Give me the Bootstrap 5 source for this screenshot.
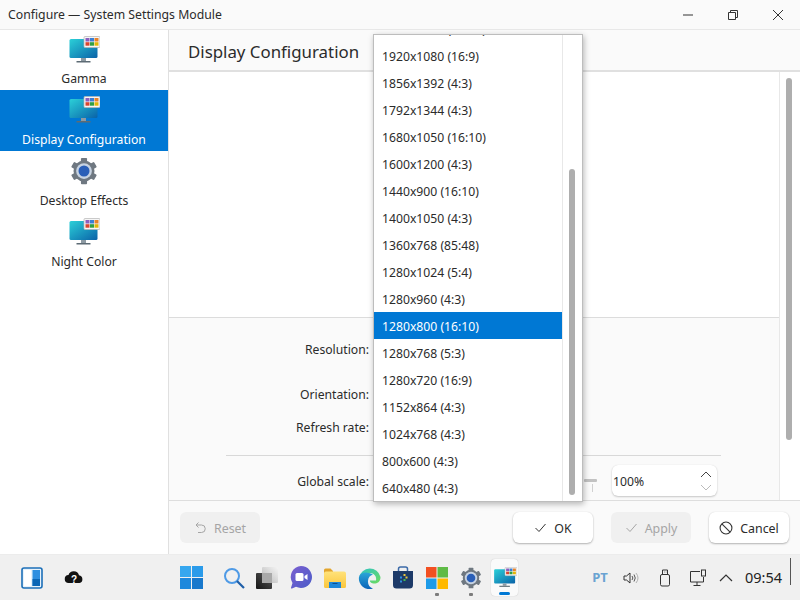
<!DOCTYPE html>
<html lang="en"><head><meta charset="utf-8"><title>Configure</title>
<link href="https://cdn.jsdelivr.net/npm/bootstrap@5.3.0/dist/css/bootstrap.min.css" rel="stylesheet">
<style>
html,body{height:100%;overflow:hidden}
body{font-family:"Noto Sans","Open Sans",sans-serif;font-size:12.2px;color:#2b2b2b;background:#fff}
.shell{width:800px;height:600px;position:relative;overflow:hidden}
.titlebar{height:30px;background:#fafafa;padding:0 0 0 8px;border-bottom:1px solid #e8e8e8}
.titlebar span{font-size:12.25px;margin-top:1px}
.winbtn{width:45px;height:29px;display:flex;align-items:center;justify-content:center}
.mainarea{height:524px}
.sidebar{width:169px;flex:none;background:#fff;border-right:1px solid #e0e0e0}
.sideitem{height:61px;padding-top:6px;text-align:center;line-height:18px}
.sideitem:first-child{height:60px}
.sideitem svg{display:block;margin:0 auto 7px}
.sideitem:first-child svg{margin-bottom:6px}
.sideitem.active-item{background:#0078d4;color:#fff}
.pane{flex:1;min-width:0;background:#fafafa}
.panehead{height:42px;border-bottom:2px solid #e0e0e0;padding:0 19px;font-size:16.85px;line-height:43px}
.paneleft{flex:1;min-width:0}
.canvasarea{height:246px;background:#fff;border-bottom:1px solid #dcdcdc}
.formarea{height:182px}
.railbox{border-left:1px solid #e8e8e8;width:21px;flex:none;position:relative;background:#fff}
.formfield{text-align:right;line-height:18px;padding-right:410px}
.fieldres{height:58px;padding-top:23px}
.fieldori{height:33px;padding-top:10px}
.fieldref{height:33px;padding-top:10px}
.sepline{border-top:1px solid #d8d8d8;margin:13px 0 0 57px;width:495px}
.fieldscale{padding-top:17px}
.buttonbar{height:54px;border-top:1px solid #dedede;padding:11px 11px 0 11px;background:#fafafa}
.winaction{width:80px;height:31px;padding:3px 0 0;font-size:12.4px;border-radius:6px;background:#fff;border:0;box-shadow:0 1px 2px rgba(0,0,0,.28),0 0 1px rgba(0,0,0,.12);color:#2b2b2b;display:flex;align-items:center;justify-content:center;gap:7px}
.winaction svg{margin-top:-3px}
.winaction.offaction{background:#f0f0f0;box-shadow:none;color:#a5a5a5;opacity:1}
.gapok{margin-left:auto}
.gapapply,.gapcancel{margin-left:18px}
.vscroll{position:absolute;left:6px;top:6px;width:6px;height:362px;border-radius:3px;background:#aeaeae}
.popup{position:absolute;left:373px;top:34px;width:210px;height:468px;background:#fff;border:1px solid #bdbdbd;box-shadow:1px 2px 6px rgba(0,0,0,.28);overflow:hidden;z-index:5;display:flex}
.popuplist{width:188px;flex:none;margin:-20px 0 0 0;padding:0;list-style:none}
.popuplist li{height:27px;line-height:30px;padding-left:8px;font-size:12.2px}
.popuplist li.pick{background:#0078d4;color:#fff}
.poprail{flex:1;border-left:1px solid #e8e8e8;position:relative}
.popthumb{position:absolute;left:6px;top:134px;width:6px;height:326px;border-radius:3px;background:#aeaeae}
.slidebit{position:absolute;left:584px;top:479px;width:13px;height:3px;background:#c2c2c2;border-radius:1px}
.slidetick{position:absolute;left:592px;top:484px;width:1px;height:8px;background:#d0d0d0}
.spinner{position:absolute;left:612px;top:465px;width:105px;height:31px;background:#fff;border-radius:6px;box-shadow:0 1px 2px rgba(0,0,0,.2),0 0 1px rgba(0,0,0,.12);padding-left:1px;display:flex;justify-content:space-between;align-items:center}
.spinner span{padding-top:4px}
.spinner svg{margin-right:5px}
.taskbar{height:46px;background:#f0f0f0;border-top:1px solid #ececec;position:relative}
.tbicon{width:34px;height:36px;flex:none;display:flex;align-items:center;justify-content:center;position:relative}
.tbleft{margin-left:15px}
.tbcloud{margin-left:8px}
.tbwin{margin-left:83px}
.tbsearch{margin-left:9px}
.tbtask{margin-left:-1px}
.tbcurrent{background:#fafafa;border-radius:4px;box-shadow:0 0 1px rgba(0,0,0,.25);width:27px;height:37px;margin-left:3px}
.dotmark{position:absolute;bottom:0;left:15px;width:4px;height:3px;border-radius:1px;background:#7c7c7c}
.barmark{position:absolute;bottom:1px;left:8px;width:11px;height:3px;border-radius:2px;background:#0078d4}
.traylang{font-size:13px;font-weight:700;color:#6aa3d2;margin-left:67px;width:30px;text-align:center}
.trayicon{width:33px;display:flex;justify-content:center;flex:none}
.trayicon.narrowtray{width:24px}
.clock{font-size:14.5px;margin-left:7px;width:40px;color:#222}
.rightedge{position:absolute;left:790px;top:3px;width:1px;height:27px;background:#555}
</style></head>
<body>
<svg width="0" height="0" class="position-absolute">
<defs>
<linearGradient id="screenfill" x1="0" y1="0" x2="1" y2="1"><stop offset="0" stop-color="#2bd0d8"/><stop offset="1" stop-color="#0a62a8"/></linearGradient>
<linearGradient id="chatfill" x1="0" y1="0" x2="1" y2="1"><stop offset="0" stop-color="#7b5fd0"/><stop offset="1" stop-color="#4a5cc8"/></linearGradient>
<linearGradient id="folderfill" x1="0" y1="0" x2="0" y2="1"><stop offset="0" stop-color="#ffe27a"/><stop offset="1" stop-color="#fbc63c"/></linearGradient>
<linearGradient id="taskfront" x1="0" y1="1" x2="1" y2="0"><stop offset="0" stop-color="#161616"/><stop offset="1" stop-color="#5a5a5a"/></linearGradient>
<linearGradient id="taskback" x1="0" y1="1" x2="1" y2="0"><stop offset="0" stop-color="#b5b5b5"/><stop offset="1" stop-color="#f4f4f4"/></linearGradient>
<linearGradient id="edgeblue" x1="0" y1="0" x2="0" y2="1"><stop offset="0" stop-color="#2aa6d8"/><stop offset="1" stop-color="#0c63b8"/></linearGradient>
<linearGradient id="edgegreen" x1="0" y1="0" x2="1" y2="1"><stop offset="0" stop-color="#2cc3c8"/><stop offset="1" stop-color="#6ddc5c"/></linearGradient>
<symbol id="monitor" viewBox="-1.500 0 32 28">
<rect x="0" y="3" width="28" height="19" rx="1.500" fill="url(#screenfill)"/>
<rect x="11.500" y="22" width="5" height="3" fill="#8d9aa3"/><rect x="7" y="25" width="14" height="1.500" fill="#5d6b74"/>
<rect x="14.500" y="0.500" width="16" height="11" rx="1" fill="#f6f6f6" stroke="#b4b4b4" stroke-width=".7"/>
<rect x="16" y="2" width="4" height="3.500" fill="#8b5fbf"/><rect x="20.500" y="2" width="4" height="3.500" fill="#3a7fd5"/><rect x="25" y="2" width="4" height="3.500" fill="#e8822a"/>
<rect x="16" y="6.200" width="4" height="3.500" fill="#d9442e"/><rect x="20.500" y="6.200" width="4" height="3.500" fill="#2f9e44"/><rect x="25" y="6.200" width="4" height="3.500" fill="#e3b505"/>
</symbol>
<symbol id="gear" viewBox="0 0 32 32">
<g fill="#6f7881"><rect x="12.500" y="1" width="7" height="30" rx="1"/><rect x="12.500" y="1" width="7" height="30" rx="1" transform="rotate(60 16 16)"/><rect x="12.500" y="1" width="7" height="30" rx="1" transform="rotate(120 16 16)"/><circle cx="16" cy="16" r="12"/></g>
<circle cx="16" cy="16" r="9" fill="#c7d3e2"/><circle cx="16" cy="16" r="6.300" fill="#2a5fb8"/>
</symbol>
</defs>
</svg>
<div class="shell d-flex flex-column">
  <div class="titlebar d-flex align-items-center justify-content-between">
    <span>Configure — System Settings Module</span>
    <div class="d-flex">
      <div class="winbtn"><svg width="12" height="12"><path d="M1 6h10" stroke="#333" fill="none"/></svg></div>
      <div class="winbtn"><svg width="12" height="12"><path d="M1.500 3.500h7v7h-7zM3.500 3.500v-2h7v7h-2" stroke="#333" fill="none"/></svg></div>
      <div class="winbtn"><svg width="12" height="12"><path d="M1 1l10 10M11 1L1 11" stroke="#333" fill="none"/></svg></div>
    </div>
  </div>
  <div class="mainarea d-flex">
    <div class="sidebar">
      <div class="sideitem"><svg width="32" height="28"><use href="#monitor"/></svg>Gamma</div>
      <div class="sideitem active-item"><svg width="32" height="28"><use href="#monitor"/></svg>Display Configuration</div>
      <div class="sideitem"><svg width="32" height="28" viewBox="0 0 32 32"><use href="#gear"/></svg>Desktop Effects</div>
      <div class="sideitem"><svg width="32" height="28"><use href="#monitor"/></svg>Night Color</div>
    </div>
    <div class="pane d-flex flex-column">
      <div class="panehead">Display Configuration</div>
      <div class="d-flex flex-column flex-grow-1">
        <div class="d-flex flex-grow-1">
          <div class="paneleft">
            <div class="canvasarea"></div>
            <div class="formarea">
              <div class="formfield fieldres">Resolution:</div>
              <div class="formfield fieldori">Orientation:</div>
              <div class="formfield fieldref">Refresh rate:</div>
              <div class="sepline"></div>
              <div class="formfield fieldscale">Global scale:</div>
            </div>
          </div>
          <div class="railbox"><div class="vscroll"></div></div>
        </div>
        <div class="buttonbar d-flex">
          <button class="btn winaction offaction" disabled><svg width="13" height="13" viewBox="0 0 13 13"><path d="M4.500 1.500L2 4l2.500 2.500M2 4h5.500a3.700 3.700 0 0 1 0 7.500H4" stroke="#a5a5a5" fill="none"/></svg>Reset</button>
          <button class="btn winaction gapok"><svg width="13" height="13" viewBox="0 0 13 13"><path d="M1.500 7l3.500 3.500 6.500-7.500" stroke="#333" fill="none"/></svg>OK</button>
          <button class="btn winaction offaction gapapply" disabled><svg width="13" height="13" viewBox="0 0 13 13"><path d="M1.500 7l3.500 3.500 6.500-7.500" stroke="#a5a5a5" fill="none"/></svg>Apply</button>
          <button class="btn winaction gapcancel"><svg width="14" height="14" viewBox="0 0 13 13"><circle cx="6.500" cy="6.500" r="5.500" stroke="#333" fill="none"/><path d="M2.700 2.700l7.600 7.600" stroke="#333"/></svg>Cancel</button>
        </div>
      </div>
    </div>
  </div>
  <div class="taskbar d-flex align-items-center">
    <div class="tbicon tbleft"><svg width="22" height="22"><rect x="1" y="1" width="20" height="20" rx="2" fill="#e7f2fb" stroke="#1c6fb8" stroke-width="1.600"/><rect x="3" y="3" width="7" height="16" fill="#fff"/><rect x="11.500" y="3" width="7.500" height="16" fill="#2e8fe0"/><rect x="11.500" y="12" width="7.500" height="7" fill="#0b66b5"/></svg></div>
    <div class="tbicon tbcloud"><svg width="20" height="16" viewBox="0 0 20 16"><path d="M5 13a4 4 0 0 1-.5-8A5.500 5.500 0 0 1 15 5.200 4 4 0 0 1 15.500 13z" fill="#111"/><text x="10" y="12.500" font-size="10" font-weight="700" text-anchor="middle" fill="#fff" font-family="Liberation Sans,sans-serif">?</text></svg></div>
    <div class="tbicon tbwin"><svg width="23" height="23"><rect width="11" height="11" fill="#36a7ef"/><rect x="12" width="11" height="11" fill="#2a9bea"/><rect y="12" width="11" height="11" fill="#1e88dc"/><rect x="12" y="12" width="11" height="11" fill="#1878cc"/></svg></div>
    <div class="tbicon tbsearch"><svg width="22" height="22"><circle cx="9" cy="9" r="7" fill="none" stroke="#4e9ae6" stroke-width="2"/><path d="M14 14l7 7" stroke="#1f5fa8" stroke-width="2.200"/></svg></div>
    <div class="tbicon tbtask"><svg width="22" height="22"><rect x="6" y="0" width="16" height="16" rx="1" fill="url(#taskback)"/><rect y="6" width="16" height="16" rx="1" fill="url(#taskfront)"/><rect x="6" y="6" width="10" height="10" fill="#a9a9a9"/></svg></div>
    <div class="tbicon"><svg width="22" height="23" viewBox="0 0 22 23"><path d="M11 0a11 11 0 1 1-5 20.800L2 22.500a.7.7 0 0 1-1-.8L2.500 17A11 11 0 0 1 11 0z" fill="url(#chatfill)"/><rect x="5.500" y="7" width="8" height="8" rx="1.500" fill="#fff"/><path d="M14.500 10l3-2v6l-3-2z" fill="#fff"/></svg></div>
    <div class="tbicon"><svg width="22" height="20"><path d="M0 2a1.500 1.500 0 0 1 1.500-1.500h5l2.500 2.500v3H0z" fill="#e3a52d"/><path d="M0 5.500a2 2 0 0 1 2-2h18a2 2 0 0 1 2 2v13a1.500 1.500 0 0 1-1.500 1.500h-19A1.500 1.500 0 0 1 0 18.500z" fill="url(#folderfill)"/><rect x="5" y="14" width="12" height="6" fill="#1e87d8"/><rect x="8.500" y="15" width="5" height="1" fill="#0d4f8f"/></svg></div>
    <div class="tbicon"><svg width="23" height="23" viewBox="0 0 23 23"><path d="M1 11.500A11 11 0 0 1 22.500 11c0 5-3.500 6.500-6 6.500-3 0-5-1.500-4.500-3h6c1-4-2-7.500-6.500-7.500C6 7 1.500 9 1 11.500z" fill="url(#edgegreen)"/><path d="M1 11A10.500 10.500 0 0 0 15 22.500 7.500 7.500 0 0 1 10 15c0-3.500 2-5.500 5-6.500C9 5 2 6 1 11z" fill="url(#edgeblue)"/></svg></div>
    <div class="tbicon"><svg width="22" height="23" viewBox="0 0 22 23"><path d="M1 5h20v14a3.500 3.500 0 0 1-3.500 3.500h-13A3.500 3.500 0 0 1 1 19z" fill="#1d3a68"/><path d="M6.500 5V3a2 2 0 0 1 2-2h5a2 2 0 0 1 2 2v2" stroke="#3b6aa8" stroke-width="1.500" fill="none"/><rect x="11.500" y="8" width="2" height="2" fill="#e8c53a"/><rect x="13.500" y="10.500" width="2" height="2" fill="#e8c53a"/><rect x="11.500" y="13" width="2" height="2" fill="#3fb950"/><rect x="8" y="10.500" width="2" height="2" fill="#2f8fe0"/><rect x="8" y="14.500" width="2" height="2" fill="#2f8fe0"/></svg></div>
    <div class="tbicon"><svg width="22" height="22"><rect width="10.500" height="10.500" fill="#f25022"/><rect x="11.500" width="10.500" height="10.500" fill="#5fbb46"/><rect y="11.500" width="10.500" height="10.500" fill="#1e9be8"/><rect x="11.500" y="11.500" width="10.500" height="10.500" fill="#ffb900"/></svg><span class="dotmark"></span></div>
    <div class="tbicon"><svg width="22" height="22" viewBox="0 0 32 32"><use href="#gear"/></svg><span class="dotmark"></span></div>
    <div class="tbicon tbcurrent"><svg width="24" height="21"><use href="#monitor"/></svg><span class="barmark"></span></div>
    <div class="traylang">PT</div>
    <div class="trayicon"><svg width="17" height="14" viewBox="0 0 17 14"><path d="M1 5h2.500L7 2v10L3.500 9H1z" fill="none" stroke="#333"/><path d="M9 5a3 3 0 0 1 0 4M11 3.500a6 6 0 0 1 0 7" fill="none" stroke="#444" stroke-width=".9"/><path d="M13 2a8 8 0 0 1 0 10" fill="none" stroke="#aaa" stroke-width=".9"/></svg></div>
    <div class="trayicon"><svg width="12" height="18" viewBox="0 0 12 18"><path d="M3.500 5V1h5v4" fill="none" stroke="#333"/><path d="M5 3h.5M6.800 3h.5" stroke="#333"/><rect x="1.500" y="5.500" width="9" height="11.500" rx="1.500" fill="none" stroke="#333"/></svg></div>
    <div class="trayicon"><svg width="18" height="17" viewBox="0 0 18 17"><path d="M11 2.500H1.500v10.500h13V8" fill="none" stroke="#333"/><path d="M8 13v3M4.500 16.500h7" stroke="#333"/><rect x="12.500" y="1" width="4" height="6" fill="none" stroke="#333"/></svg></div>
    <div class="trayicon narrowtray"><svg width="14" height="8"><path d="M1 7l6-6 6 6" fill="none" stroke="#333" stroke-width="1.200"/></svg></div>
    <div class="clock">09:54</div>
    <div class="rightedge"></div>
  </div>
  <ul class="popup m-0 p-0">
    <li class="d-block">
      <ul class="popuplist">
        <li>1920x1200 (16:10)</li><li>1920x1080 (16:9)</li><li>1856x1392 (4:3)</li><li>1792x1344 (4:3)</li><li>1680x1050 (16:10)</li><li>1600x1200 (4:3)</li><li>1440x900 (16:10)</li><li>1400x1050 (4:3)</li><li>1360x768 (85:48)</li><li>1280x1024 (5:4)</li><li>1280x960 (4:3)</li><li class="pick">1280x800 (16:10)</li><li>1280x768 (5:3)</li><li>1280x720 (16:9)</li><li>1152x864 (4:3)</li><li>1024x768 (4:3)</li><li>800x600 (4:3)</li><li>640x480 (4:3)</li>
      </ul>
    </li>
    <li class="poprail d-block"><div class="popthumb"></div></li>
  </ul>
  <div class="slidebit"></div><div class="slidetick"></div>
  <div class="spinner"><span>100%</span><svg width="12" height="22" viewBox="0 0 12 22"><path d="M1 7l5-5 5 5" fill="none" stroke="#444"/><path d="M1 15l5 5 5-5" fill="none" stroke="#bbb"/></svg></div>
</div>
</body></html>
